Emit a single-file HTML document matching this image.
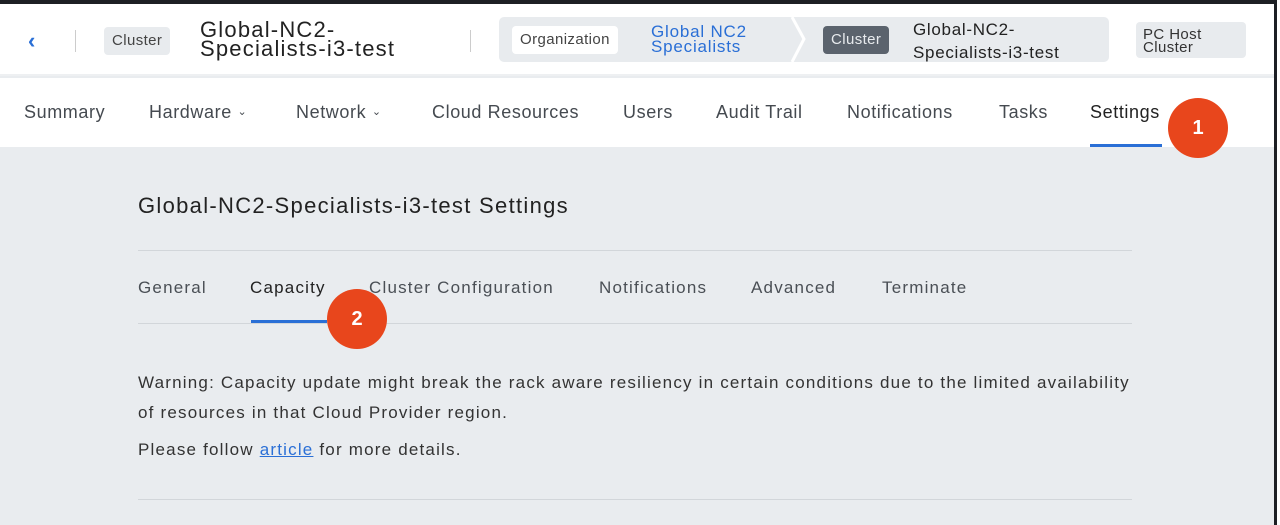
<!DOCTYPE html>
<html><head><style>
*{margin:0;padding:0;box-sizing:border-box}
body{width:1280px;height:525px;overflow:hidden;background:#e9ecef;font-family:"Liberation Sans",sans-serif;position:relative;color:#333}
.a{position:absolute;white-space:nowrap}
.top{position:absolute;left:0;top:0;width:1280px;height:4px;background:#1d1f24}
.rb{position:absolute;left:1274px;top:0;width:3px;height:525px;background:#1d1f24}
.rw{position:absolute;left:1277px;top:0;width:3px;height:525px;background:#fff}
.hdr{position:absolute;left:0;top:4px;width:1274px;height:72px;background:#fff;border-bottom:2px solid #eef0f2}
.nav{position:absolute;left:0;top:78px;width:1274px;height:69px;background:#fff}
.pill{background:#e8ebee;border-radius:4px;font-size:15px;color:#444;padding:0 8px;line-height:28px;letter-spacing:0.4px}
.nv{font-size:18px;color:#454a50;top:102px;letter-spacing:0.6px}
.st{font-size:17px;color:#4a4f55;top:278px;letter-spacing:1.2px}
.badge{position:absolute;width:60px;height:60px;border-radius:50%;background:#e8461c;color:#fff;font-size:20px;font-weight:bold;text-align:center;line-height:60px}
.p{font-size:17px;color:#333;letter-spacing:1.2px}
.ch{font-size:11px;letter-spacing:0;position:relative;top:-3px}
</style></head><body>
<div class="top"></div>
<div class="hdr"></div>
<div class="nav"></div>
<div class="rb"></div><div class="rw"></div>
<div class="a" style="left:28px;top:28px;color:#2a6fd6;font-size:22px;font-weight:bold">‹</div>
<div class="a" style="left:75px;top:30px;width:1px;height:22px;background:#ccc"></div>
<div class="a pill" style="left:104px;top:27px">Cluster</div>
<div class="a" style="left:200px;top:20px;font-size:22px;line-height:19px;color:#222;letter-spacing:1.2px">Global-NC2-<br>Specialists-i3-test</div>
<div class="a" style="left:470px;top:30px;width:1px;height:22px;background:#ccc"></div>
<div class="a" style="left:499px;top:17px;width:610px;height:45px;background:#e8ebee;border-radius:5px"></div>
<svg class="a" style="left:790px;top:17px" width="20" height="45"><path d="M2 0 L14 22 L2 45" fill="none" stroke="#fff" stroke-width="3"/></svg>
<div class="a pill" style="left:512px;top:26px;background:#fff">Organization</div>
<div class="a" style="left:651px;top:24px;font-size:17px;line-height:15px;color:#2a6fd6;letter-spacing:0.8px">Global NC2<br>Specialists</div>
<div class="a pill" style="left:823px;top:26px;background:#5b636d;color:#e8ebee">Cluster</div>
<div class="a" style="left:913px;top:18px;font-size:17px;line-height:23px;color:#222;letter-spacing:0.7px">Global-NC2-<br>Specialists-i3-test</div>
<div class="a" style="left:1136px;top:22px;width:110px;height:36px;background:#e8ebee;border-radius:4px"></div>
<div class="a" style="left:1143px;top:28px;font-size:15px;line-height:13px;color:#333;letter-spacing:0.4px">PC Host<br>Cluster</div>
<div class="a nv" style="left:24px">Summary</div>
<div class="a nv" style="left:149px">Hardware <span class="ch">⌄</span></div>
<div class="a nv" style="left:296px">Network <span class="ch">⌄</span></div>
<div class="a nv" style="left:432px">Cloud Resources</div>
<div class="a nv" style="left:623px">Users</div>
<div class="a nv" style="left:716px">Audit Trail</div>
<div class="a nv" style="left:847px">Notifications</div>
<div class="a nv" style="left:999px">Tasks</div>
<div class="a nv" style="left:1090px;color:#222">Settings</div>
<div class="a" style="left:1090px;top:144px;width:72px;height:3px;background:#2a6fd6"></div>
<div class="badge" style="left:1168px;top:98px">1</div>
<div class="a" style="left:138px;top:193px;font-size:22px;color:#222;letter-spacing:1.3px">Global-NC2-Specialists-i3-test Settings</div>
<div class="a" style="left:138px;top:250px;width:994px;height:1px;background:#d2d6da"></div>
<div class="a st" style="left:138px">General</div>
<div class="a st" style="left:250px;color:#222">Capacity</div>
<div class="a st" style="left:369px">Cluster Configuration</div>
<div class="a st" style="left:599px">Notifications</div>
<div class="a st" style="left:751px">Advanced</div>
<div class="a st" style="left:882px">Terminate</div>
<div class="a" style="left:138px;top:323px;width:994px;height:1px;background:#d2d6da"></div>
<div class="a" style="left:251px;top:320px;width:76px;height:3px;background:#2a6fd6"></div>
<div class="badge" style="left:327px;top:289px">2</div>
<div class="a p" style="left:138px;top:373px">Warning: Capacity update might break the rack aware resiliency in certain conditions due to the limited availability</div>
<div class="a p" style="left:138px;top:403px">of resources in that Cloud Provider region.</div>
<div class="a p" style="left:138px;top:440px">Please follow <span style="color:#2a6fd6;text-decoration:underline">article</span> for more details.</div>
<div class="a" style="left:138px;top:499px;width:994px;height:1px;background:#d2d6da"></div>
</body></html>
